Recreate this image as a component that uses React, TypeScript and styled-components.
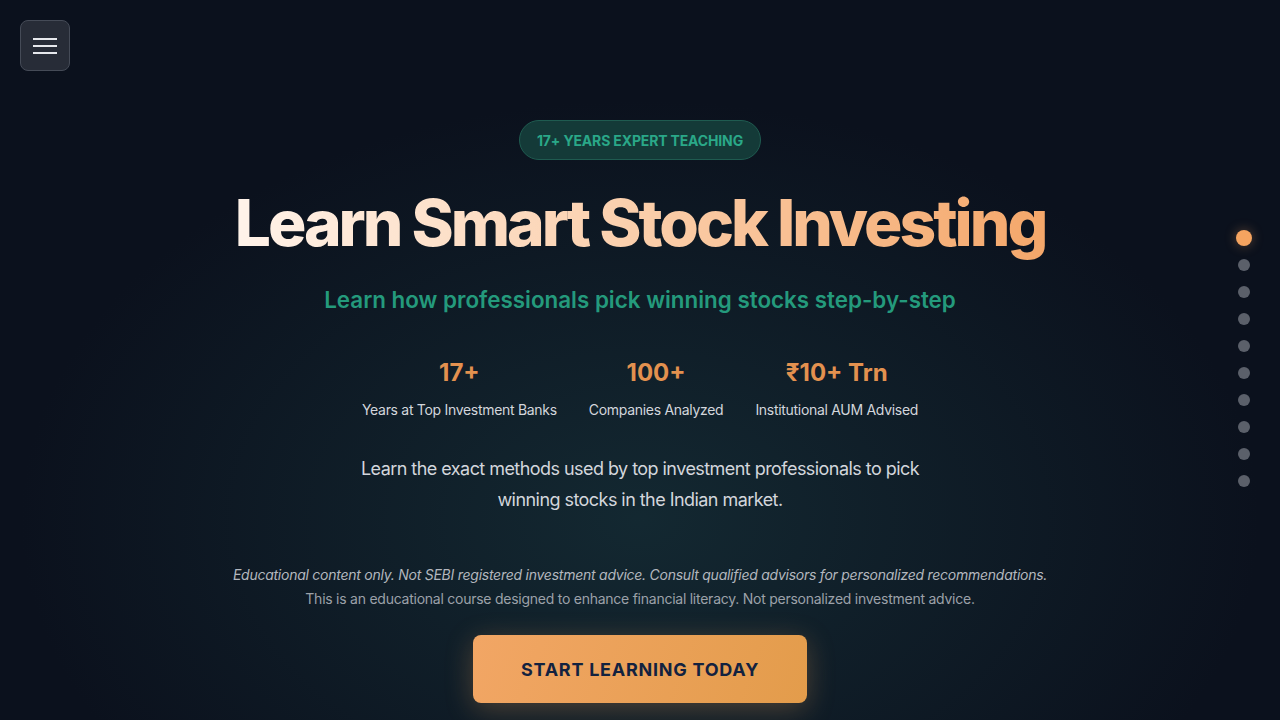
import styled, { createGlobalStyle } from 'styled-components'

const colors = {
  bg: '#0b111d',
  teal: '#2aa888',
  tealText: '#249a7c',
  orange: '#e3914f',
  light: '#d3d6dc',
  muted: '#a3a8b1',
  navy: '#13223f'
}

const GlobalStyle = createGlobalStyle`
  html, body {
    margin: 0;
    padding: 0;
    background: ${colors.bg};
  }
  body {
    font-family: Inter, 'Noto Sans', sans-serif;
    -webkit-font-smoothing: antialiased;
  }
  * { box-sizing: border-box; }
`

const Page = styled.div`
  position: relative;
  width: 100%;
  height: 720px;
  overflow: hidden;
  background:
    radial-gradient(ellipse 620px 420px at 640px 520px, rgba(22, 48, 56, 0.75), rgba(11, 17, 29, 0) 100%),
    ${colors.bg};
`

const MenuButton = styled.button`
  position: absolute;
  top: 20px;
  left: 20px;
  width: 50px;
  height: 51px;
  border-radius: 8px;
  background: #272c37;
  border: 1px solid #454b57;
  display: flex;
  flex-direction: column;
  align-items: center;
  justify-content: center;
  gap: 5px;
  padding: 0;
  cursor: pointer;
  span {
    display: block;
    width: 24px;
    height: 2px;
    background: #e6e8ec;
  }
`

const Hero = styled.main`
  display: flex;
  flex-direction: column;
  align-items: center;
  padding-top: 120px;
  text-align: center;
`

const Badge = styled.div`
  height: 40px;
  padding: 0 17px;
  border-radius: 20px;
  display: flex;
  align-items: center;
  background: #143a38;
  border: 1px solid #1f5b50;
  color: ${colors.teal};
  font-size: 14px;
  font-weight: 700;
  letter-spacing: -0.15px;
`

const Title = styled.h1`
  margin: 24px 0 0;
  font-size: 64px;
  line-height: 78px;
  font-weight: 800;
  letter-spacing: -3px;
  background: linear-gradient(90deg, #fff3ea 0%, #fbd2b1 45%, #f4a76a 100%);
  -webkit-background-clip: text;
  background-clip: text;
  color: transparent;
`

const Subtitle = styled.h2`
  margin: 23px 0 0;
  font-size: 22.4px;
  line-height: 30px;
  font-weight: 600;
  color: ${colors.tealText};
`

const Stats = styled.div`
  display: flex;
  gap: 32px;
  margin-top: 43px;
`

const Stat = styled.div`
  display: flex;
  flex-direction: column;
  align-items: center;
`

const StatValue = styled.div`
  font-size: 24px;
  line-height: 30px;
  font-weight: 700;
  color: ${colors.orange};
`

const StatLabel = styled.div`
  margin-top: 13px;
  font-size: 14px;
  line-height: 18px;
  letter-spacing: -0.3px;
  color: ${colors.light};
`

const Lead = styled.p`
  margin: 34px 0 0;
  max-width: 580px;
  font-size: 18px;
  line-height: 31px;
  letter-spacing: -0.55px;
  color: ${colors.light};
`

const Disclaimer = styled.p<{ $italic?: boolean }>`
  margin: ${p => (p.$italic ? '50px 0 0' : '4px 0 0')};
  font-size: 14px;
  line-height: 20px;
  letter-spacing: -0.25px;
  font-style: ${p => (p.$italic ? 'italic' : 'normal')};
  color: ${p => (p.$italic ? '#b3b7be' : '#9ca1a9')};
`

const Cta = styled.button`
  margin-top: 26px;
  width: 334px;
  height: 68px;
  border: none;
  border-radius: 8px;
  background: linear-gradient(110deg, #f2a665 0%, #e39c4b 100%);
  box-shadow: 0 6px 28px rgba(240, 160, 90, 0.28);
  color: ${colors.navy};
  font-family: Inter, 'Noto Sans', sans-serif;
  font-size: 18px;
  font-weight: 700;
  letter-spacing: 0.75px;
  cursor: pointer;
`

const DotNav = styled.nav`
  position: absolute;
  right: 28px;
  top: 230px;
  display: flex;
  flex-direction: column;
  align-items: center;
  gap: 15px;
`

const Dot = styled.span<{ $active?: boolean }>`
  display: block;
  width: ${p => (p.$active ? '16px' : '12px')};
  height: ${p => (p.$active ? '16px' : '12px')};
  margin: ${p => (p.$active ? '0 0 -2px' : '0')};
  border-radius: 50%;
  background: ${p => (p.$active ? '#f5a460' : '#5b606a')};
  box-shadow: ${p => (p.$active ? '0 0 12px rgba(245, 164, 96, 0.35)' : 'none')};
`

const stats = [
  { value: '17+', label: 'Years at Top Investment Banks' },
  { value: '100+', label: 'Companies Analyzed' },
  { value: '₹10+ Trn', label: 'Institutional AUM Advised' }
]

export default function App() {
  return (
    <Page>
      <GlobalStyle />
      <MenuButton aria-label="Menu">
        <span />
        <span />
        <span />
      </MenuButton>
      <Hero>
        <Badge>17+ YEARS EXPERT TEACHING</Badge>
        <Title>Learn Smart Stock Investing</Title>
        <Subtitle>Learn how professionals pick winning stocks step-by-step</Subtitle>
        <Stats>
          {stats.map(s => (
            <Stat key={s.label}>
              <StatValue>{s.value}</StatValue>
              <StatLabel>{s.label}</StatLabel>
            </Stat>
          ))}
        </Stats>
        <Lead>
          Learn the exact methods used by top investment professionals to pick winning stocks in the Indian market.
        </Lead>
        <Disclaimer $italic>
          Educational content only. Not SEBI registered investment advice. Consult qualified advisors for personalized recommendations.
        </Disclaimer>
        <Disclaimer>
          This is an educational course designed to enhance financial literacy. Not personalized investment advice.
        </Disclaimer>
        <Cta>START LEARNING TODAY</Cta>
      </Hero>
      <DotNav>
        {Array.from({ length: 10 }).map((_, i) => (
          <Dot key={i} $active={i === 0} />
        ))}
      </DotNav>
    </Page>
  )
}
